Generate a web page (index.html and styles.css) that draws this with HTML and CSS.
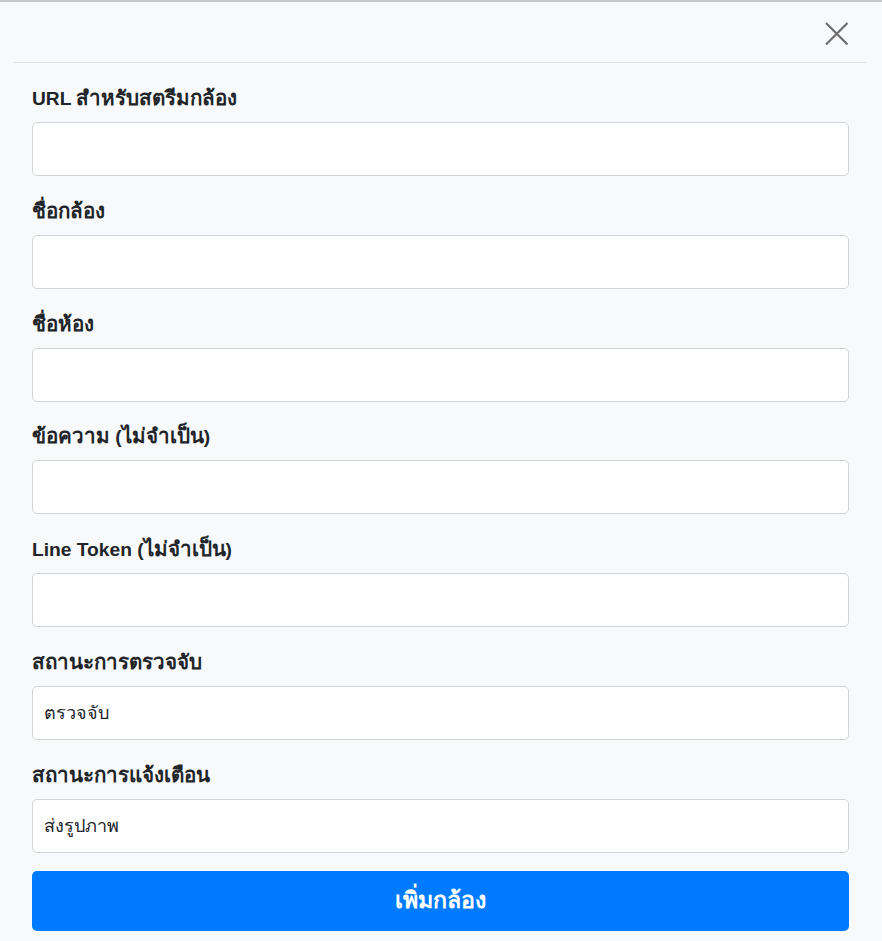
FILE: index.html
```html
<!DOCTYPE html>
<html lang="th">
<head>
<meta charset="utf-8">
<title>เพิ่มกล้อง</title>
<link rel="stylesheet" href="styles.css">
</head>
<body>
<div class="modal">
  <div class="modal-header">
    <button class="close" aria-label="Close">
      <svg width="26" height="26" viewBox="0 0 26 26"><path d="M2 2 L23.5 23.5 M23.5 2 L2 23.5" stroke="#6c6c6c" stroke-width="2.2" fill="none"/></svg>
    </button>
  </div>
  <form class="modal-body">
    <div class="group">
      <label class="label">URL <span class="th">สำหรับสตรีมกล้อง</span></label>
      <input class="input" type="text">
    </div>
    <div class="group">
      <label class="label"><span class="th">ชื่อกล้อง</span></label>
      <input class="input" type="text">
    </div>
    <div class="group">
      <label class="label"><span class="th">ชื่อห้อง</span></label>
      <input class="input" type="text">
    </div>
    <div class="group">
      <label class="label"><span class="th">ข้อความ</span> (<span class="th">ไม่จำเป็น</span>)</label>
      <input class="input" type="text">
    </div>
    <div class="group">
      <label class="label">Line Token (<span class="th">ไม่จำเป็น</span>)</label>
      <input class="input" type="text">
    </div>
    <div class="group">
      <label class="label"><span class="th">สถานะการตรวจจับ</span></label>
      <div class="input select">ตรวจจับ</div>
    </div>
    <div class="group">
      <label class="label"><span class="th">สถานะการแจ้งเตือน</span></label>
      <div class="input select">ส่งรูปภาพ</div>
    </div>
    <button type="button" class="submit"><span class="th">เพิ่มกล้อง</span></button>
  </form>
</div>
</body>
</html>
```
FILE: styles.css
```css
html, body {
  margin: 0;
  padding: 0;
  background: #f8f9fa;
}
body {
  font-family: "Liberation Sans", Arial, "Noto Sans", sans-serif;
  color: #212529;
  border-top: 2px solid #c8c8ca;
}
.modal {
  display: flex;
  flex-direction: column;
}
.modal-header {
  margin: 0 16px 0 14px;
  box-sizing: border-box;
  height: 61px;
  padding-top: 19px;
  border-bottom: 1px solid #dee2e6;
  display: flex;
  justify-content: flex-end;
  align-items: flex-start;
}
.close {
  background: none;
  border: 0;
  padding: 0;
  margin-right: 16px;
  width: 26px;
  height: 26px;
  display: flex;
  cursor: pointer;
}
.modal-body {
  padding: 22px 33px 10px 32px;
  display: flex;
  flex-direction: column;
}
.group {
  display: flex;
  flex-direction: column;
  margin-bottom: 21.8px;
}
.label {
  font-size: 19.2px;
  font-weight: bold;
  line-height: 27px;
  height: 27px;
  margin-bottom: 10px;
  white-space: nowrap;
}
.label .th {
  font-size: 1.07em;
  line-height: 1;
}
.input {
  box-sizing: border-box;
  height: 54px;
  width: 100%;
  border: 1px solid #ced4da;
  border-radius: 5px;
  background: #fff;
  font-family: inherit;
  font-size: 18px;
  padding: 0 11px;
}
.select {
  display: flex;
  align-items: center;
}
.group:nth-last-of-type(1) {
  margin-bottom: 18.2px;
}
.submit {
  height: 60px;
  border: 0;
  border-radius: 5px;
  background: #007bff;
  color: #fff;
  font-family: inherit;
  font-size: 20px;
  font-weight: bold;
}
.submit .th {
  font-size: 1.16em;
  line-height: 1;
}
```
